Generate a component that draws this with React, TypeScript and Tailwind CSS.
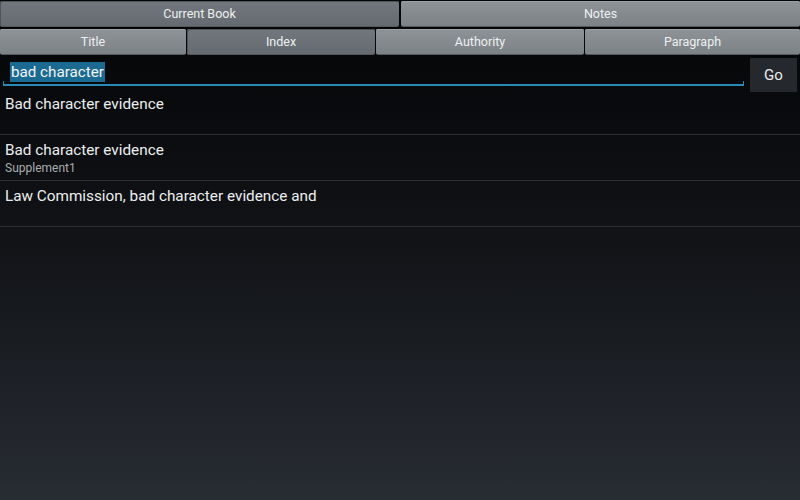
const tabsTop = [
  { label: 'Current Book', active: true },
  { label: 'Notes', active: false },
]

const tabsBottom = [
  { label: 'Title', active: false, w: 'w-[186px]' },
  { label: 'Index', active: true, w: 'w-[188px]' },
  { label: 'Authority', active: false, w: 'w-[208px]' },
  { label: 'Paragraph', active: false, w: 'flex-1' },
]

const results = [
  { title: 'Bad character evidence', sub: '' },
  { title: 'Bad character evidence', sub: 'Supplement1' },
  { title: 'Law Commission, bad character evidence and', sub: '' },
]

function Tab({ label, active, className = '' }: { label: string; active: boolean; className?: string }) {
  return (
    <button
      type="button"
      className={
        'h-[26px] pt-[2px] flex items-center justify-center rounded-[2px] text-[12.5px] text-[#eef0f1] border-b border-[#55595d] ' +
        (active
          ? 'bg-gradient-to-b from-[#71777c] to-[#656b70] shadow-[inset_1px_1px_0_#4e5357]'
          : 'bg-gradient-to-b from-[#8d9397] to-[#7c8286] shadow-[inset_0_1px_0_#9aa0a4]') +
        ' ' + className
      }
    >
      {label}
    </button>
  )
}

export default function App() {
  return (
    <div className="w-[800px] h-[500px] overflow-hidden bg-gradient-to-b from-[#040506] via-[#121418] to-[#282c33] font-['Roboto','Liberation_Sans',sans-serif]">
      <div className="flex gap-[2px] pt-px">
        {tabsTop.map(t => (
          <Tab key={t.label} label={t.label} active={t.active} className="flex-1" />
        ))}
      </div>
      <div className="flex gap-[1px] pt-[2px]">
        {tabsBottom.map(t => (
          <Tab key={t.label} label={t.label} active={t.active} className={t.w} />
        ))}
      </div>

      <div className="flex items-start gap-[6px] pl-[3px] pr-[3px] pt-[3px]">
        <div className="flex-1 relative h-[30px]">
          <div className="pt-[2px] pl-[7px]">
            <span className="bg-[#1b6a92] text-[#f2f4f5] text-[15.2px] leading-[20px] px-[1px] inline-block">bad character</span>
          </div>
          <div className="absolute left-0 right-0 bottom-[2px] h-[2px] bg-[#2a8ab3]" />
          <div className="absolute left-0 bottom-[2px] w-px h-[5px] bg-[#2a8ab3]" />
          <div className="absolute right-0 bottom-[2px] w-px h-[5px] bg-[#2a8ab3]" />
        </div>
        <button type="button" className="w-[47px] h-[34px] bg-[#25282c] text-[#eceeef] text-[15px] rounded-[1px]">
          Go
        </button>
      </div>

      <div className="-mt-[3px]">
        {results.map((r, i) => (
          <div key={i} className="h-[46px] border-b border-[#2b2e32] px-[5px] pt-[4px]">
            <div className="text-[15.3px] leading-[22px] text-[#eceeef]">{r.title}</div>
            {r.sub && <div className="text-[12px] leading-[15px] text-[#a9adb0]">{r.sub}</div>}
          </div>
        ))}
      </div>
    </div>
  )
}
